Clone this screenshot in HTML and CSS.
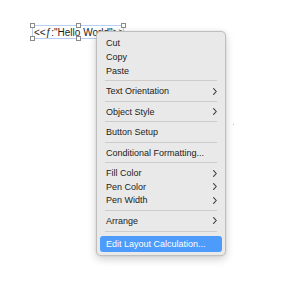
FILE: index.html
```html
<!DOCTYPE html>
<html>
<head>
<meta charset="utf-8">
<link rel="stylesheet" href="styles.css">
</head>
<body>
<div class="canvas">
  <div class="field">
    <span class="handle h-tl"></span><span class="handle h-tm"></span><span class="handle h-tr"></span>
    <span class="handle h-bl"></span><span class="handle h-bm"></span><span class="handle h-br"></span>
    <span class="field-text">&lt;&lt;ƒ:"Hello World"&gt;&gt;</span>
  </div>
  <div class="dot"></div>
  <div class="menu">
    <div class="item">Cut</div>
    <div class="item">Copy</div>
    <div class="item">Paste</div>
    <div class="sep"></div>
    <div class="item sub">Text Orientation<svg class="chev" viewBox="0 0 4 7"><path d="M0.6 0.6 L3.3 3.5 L0.6 6.4"/></svg></div>
    <div class="sep"></div>
    <div class="item sub">Object Style<svg class="chev" viewBox="0 0 4 7"><path d="M0.6 0.6 L3.3 3.5 L0.6 6.4"/></svg></div>
    <div class="sep"></div>
    <div class="item">Button Setup</div>
    <div class="sep"></div>
    <div class="item">Conditional Formatting...</div>
    <div class="sep"></div>
    <div class="item sub">Fill Color<svg class="chev" viewBox="0 0 4 7"><path d="M0.6 0.6 L3.3 3.5 L0.6 6.4"/></svg></div>
    <div class="item sub">Pen Color<svg class="chev" viewBox="0 0 4 7"><path d="M0.6 0.6 L3.3 3.5 L0.6 6.4"/></svg></div>
    <div class="item sub">Pen Width<svg class="chev" viewBox="0 0 4 7"><path d="M0.6 0.6 L3.3 3.5 L0.6 6.4"/></svg></div>
    <div class="sep"></div>
    <div class="item sub">Arrange<svg class="chev" viewBox="0 0 4 7"><path d="M0.6 0.6 L3.3 3.5 L0.6 6.4"/></svg></div>
    <div class="sep"></div>
    <div class="item active">Edit Layout Calculation...</div>
  </div>
</div>
</body>
</html>
```

FILE: styles.css
```css
html, body {
  margin: 0;
  padding: 0;
  background: #ffffff;
}

.canvas {
  position: relative;
  width: 300px;
  height: 285px;
  overflow: hidden;
  font-family: "Liberation Sans", Arial, sans-serif;
}

.field {
  position: absolute;
  left: 32px;
  top: 25px;
  width: 92px;
  height: 14px;
  box-sizing: border-box;
  border: 1px solid #b7cff0;
}

.field-text {
  position: absolute;
  left: 1px;
  top: 1px;
  font-size: 10px;
  line-height: 12px;
  color: #1e1e1e;
  white-space: nowrap;
}

.handle {
  position: absolute;
  width: 3px;
  height: 3px;
  background: #ffffff;
  border: 1px solid #8a8a8a;
  z-index: 1;
}
.h-tl { left: -3px; top: -3px; }
.h-tm { left: 43px; top: -3px; }
.h-tr { right: -3px; top: -3px; }
.h-bl { left: -3px; bottom: -3px; }
.h-bm { left: 43px; bottom: -3px; }
.h-br { right: -3px; bottom: -3px; }

.dot {
  position: absolute;
  left: 233px;
  top: 124px;
  width: 1px;
  height: 1px;
  background: #b8b8b8;
}

.menu {
  position: absolute;
  left: 96px;
  top: 31px;
  width: 130px;
  box-sizing: border-box;
  padding: 4.5px 0 3px;
  background: #e9e9e9;
  border: 0.5px solid rgba(0, 0, 0, 0.18);
  border-radius: 5px;
  box-shadow: 0 3px 9px rgba(0, 0, 0, 0.2), 0 0 2px rgba(0, 0, 0, 0.1);
  display: flex;
  flex-direction: column;
  z-index: 2;
}

.item {
  display: flex;
  align-items: center;
  justify-content: space-between;
  height: 13.7px;
  padding: 0 8px 0 9px;
  font-size: 9px;
  color: #222222;
  white-space: nowrap;
}

.chev {
  width: 4px;
  height: 7px;
  fill: none;
  stroke: #3a3a3a;
  stroke-width: 1.1;
  stroke-linecap: round;
  stroke-linejoin: round;
}

.sep {
  height: 1px;
  margin: 2.9px 8px 2.9px 8px;
  background: #cdcdcd;
}

.item.active {
  margin: 1.5px 3px 0;
  padding: 0 5px 0 6px;
  height: 16px;
  background: #4d9bfb;
  color: #ffffff;
  border-radius: 3px;
}
```
